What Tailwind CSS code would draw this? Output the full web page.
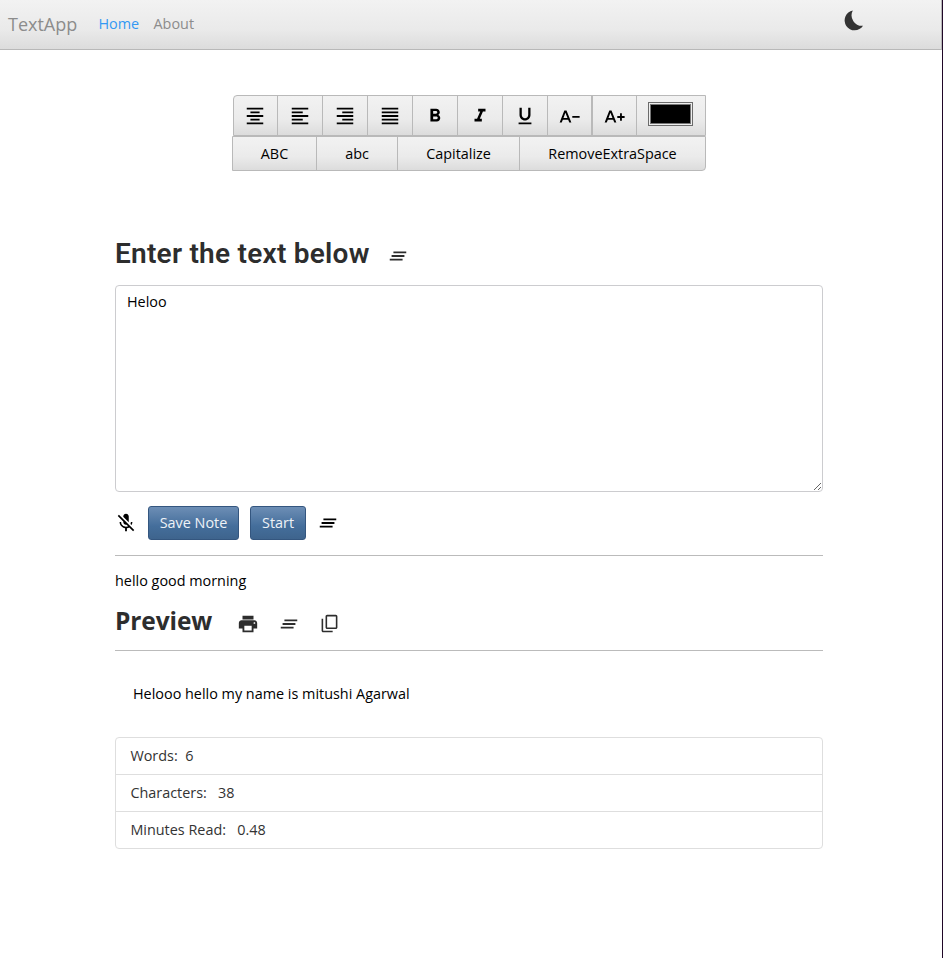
<!DOCTYPE html>
<html lang="en">
<head>
<meta charset="utf-8">
<title>TextApp</title>
<script src="https://cdn.jsdelivr.net/npm/@tailwindcss/browser@4"></script>
</head>
<body class="h-[958px] overflow-hidden bg-white font-['Open_Sans','Noto_Sans',sans-serif] text-[14.4px] leading-[21px] text-black">
<svg class="hidden">
  <symbol id="clear" viewBox="0 0 24 24"><path d="M5 13h14v-2H5v2zm-2 4h14v-2H3v2zM7 7v2h14V7H7z"/></symbol>
</svg>
<div class="h-full border-r border-[#200828]">
  <nav class="flex h-[50px] items-center border-r border-b border-[#b8b8b8] bg-linear-to-b from-[#f2f2f2] via-[#eaeaea] via-60% to-[#dcdcdc] pl-2 text-[#8c8c8c]">
    <a class="w-[90.5px] pb-px text-[18px]">TextApp</a>
    <a class="w-[55px] pb-[3px] text-[#3399f3]">Home</a>
    <a class="pb-[3px]">About</a>
    <svg class="mr-[76px] mb-[7px] ml-auto size-[22px]" viewBox="0 0 22 22" fill="#333"><path d="M9.800 .5A10 10 0 1 0 20 15.800A10.500 10.500 0 0 1 9.800 .5z"/></svg>
  </nav>

  <div class="ml-[232px] mt-[45px] w-[474px]">
    <div class="ml-px flex h-[41px] overflow-hidden rounded-tl-[4px] border border-[#b9b9b9] bg-linear-to-b from-[#f2f2f2] via-[#ebebeb] via-60% to-[#dcdcdc]">
      <button class="flex w-[43px] items-center justify-center pt-px pr-px"><svg class="size-[22px]" viewBox="0 0 24 24"><path d="M7 15v2h10v-2H7zm-4 6h18v-2H3v2zm0-8h18v-2H3v2zm4-6v2h10V7H7zM3 3v2h18V3H3z"/></svg></button>
      <button class="flex w-[45px] items-center justify-center border-l border-[#b9b9b9] pt-px"><svg class="size-[22px]" viewBox="0 0 24 24"><path d="M15 15H3v2h12v-2zm0-8H3v2h12V7zM3 13h18v-2H3v2zm0 8h18v-2H3v2zM3 3v2h18V3H3z"/></svg></button>
      <button class="flex w-[45px] items-center justify-center border-l border-[#b9b9b9] pt-px"><svg class="size-[22px]" viewBox="0 0 24 24"><path d="M3 21h18v-2H3v2zm6-4h12v-2H9v2zm-6-4h18v-2H3v2zm6-4h12V7H9v2zM3 3v2h18V3H3z"/></svg></button>
      <button class="flex w-[45px] items-center justify-center border-l border-[#b9b9b9] pt-px"><svg class="size-[22px]" viewBox="0 0 24 24"><path d="M3 21h18v-2H3v2zm0-4h18v-2H3v2zm0-4h18v-2H3v2zm0-4h18V7H3v2zm0-6v2h18V3H3z"/></svg></button>
      <button class="flex w-[45px] items-center justify-center border-l border-[#b9b9b9] pt-px"><svg class="size-[22px]" viewBox="0 0 24 24"><path d="M15.600 10.790c.97-.67 1.650-1.770 1.650-2.790 0-2.260-1.750-4-4-4H7v14h7.040c2.090 0 3.710-1.700 3.710-3.790 0-1.520-.86-2.820-2.150-3.420zM10 6.500h3c.83 0 1.500.67 1.500 1.500s-.67 1.500-1.500 1.500h-3v-3zm3.500 9H10v-3h3.500c.83 0 1.500.67 1.500 1.500s-.67 1.500-1.500 1.500z"/></svg></button>
      <button class="flex w-[45px] items-center justify-center border-l border-[#b9b9b9] pt-px"><svg class="size-[22px]" viewBox="0 0 24 24"><path d="M10 4v3h2.210l-3.420 8H6v3h8v-3h-2.210l3.420-8H18V4z"/></svg></button>
      <button class="flex w-[45px] items-center justify-center border-l border-[#b9b9b9] pt-px pr-px"><svg class="size-[22px]" viewBox="0 0 24 24"><path d="M12 17c3.310 0 6-2.690 6-6V3h-2.500v8c0 1.930-1.570 3.500-3.500 3.500S8.500 12.930 8.500 11V3H6v8c0 3.310 2.690 6 6 6zm-7 2v2h14v-2H5z"/></svg></button>
      <button class="flex w-[44px] items-center justify-center border-l border-[#b9b9b9] pt-[2px]"><svg class="size-[22px]" viewBox="0 0 24 24"><path fill-rule="evenodd" d="M5.800 5h2.400l5.300 13h-2.300l-1.200-3H4.200l-1.200 3H.7zM7 7.400L4.900 13h4.300zM14.500 10.800h8v2h-8z"/></svg></button>
      <button class="flex w-[45px] items-center justify-center border-l-2 border-[#b9b9b9] pt-[2px]"><svg class="size-[22px]" viewBox="0 0 24 24"><path fill-rule="evenodd" d="M5.800 5h2.400l5.300 13h-2.300l-1.200-3H4.200l-1.200 3H.7zM7 7.400L4.900 13h4.300zM14.500 11h3V8h2v3h3v2h-3v3h-2v-3h-3z"/></svg></button>
      <button class="flex flex-1 justify-center border-l border-[#b9b9b9] pt-[6px] pr-[2px]"><span class="h-6 w-[45px] border border-[#6b6b6b] bg-[#eee] p-px"><span class="block h-full border border-[#777] bg-black"></span></span></button>
    </div>
    <div class="flex h-[35px] overflow-hidden rounded-br-[4px] border border-[#b9b9b9] bg-linear-to-b from-[#f2f2f2] via-[#ebebeb] via-60% to-[#dcdcdc]">
      <button class="w-[83px]">ABC</button>
      <button class="w-[81px] border-l border-[#b9b9b9]">abc</button>
      <button class="w-[122px] border-l border-[#b9b9b9]">Capitalize</button>
      <button class="flex-1 border-l border-[#b9b9b9]">RemoveExtraSpace</button>
    </div>
  </div>

  <main class="ml-[115px] w-[708px] pt-[62px]">
    <h1 class="flex h-[42px] items-center text-[#2d2d2d]">
      <span class="w-[272px] whitespace-nowrap pb-[2px] font-['Roboto',sans-serif] text-[28px] font-semibold tracking-[0.25px]">Enter the text below</span>
      <svg class="mt-[4px] size-[22px]" fill="#2d2d2d"><use href="#clear"/></svg>
    </h1>
    <textarea class="mt-[10px] block h-[207px] w-full resize rounded-[4px] border border-[#cccccf] px-[11px] py-[5px]">Heloo</textarea>
    <div class="mt-[14px] flex h-[34px] items-center text-[#eef2f7]">
      <svg class="mr-[11px] size-[22px]" viewBox="0 0 24 24" fill="#000"><path d="M19 11h-1.700c0 .74-.16 1.430-.43 2.050l1.230 1.230c.56-.98.9-2.090.9-3.280zm-4.020.17c0-.06.02-.11.02-.17V5c0-1.660-1.340-3-3-3S9 3.340 9 5v.18l5.980 5.990zM4.270 3L3 4.270l6.010 6.010V11c0 1.660 1.330 3 2.990 3 .22 0 .44-.03.65-.08l1.660 1.660c-.71.33-1.500.52-2.310.52-2.760 0-5.300-2.100-5.300-5.100H5c0 3.410 2.720 6.230 6 6.720V21h2v-3.280c.91-.13 1.770-.45 2.540-.9L19.730 21 21 19.730 4.270 3z"/></svg>
      <button class="mr-[11px] h-full w-[91px] rounded-[3px] border border-[#34567f] bg-linear-to-b from-[#6d8eb5] via-[#446e9b] via-60% to-[#3e648d] pb-[2px]">Save Note</button>
      <button class="mr-[11px] h-full w-[56px] rounded-[3px] border border-[#34567f] bg-linear-to-b from-[#6d8eb5] via-[#446e9b] via-60% to-[#3e648d] pb-[2px]">Start</button>
      <svg class="size-[22px]" fill="#000"><use href="#clear"/></svg>
    </div>
    <hr class="mt-[15px] border-[#bbb]">
    <p class="mt-[14px]">hello good morning</p>
    <h2 class="mt-[11px] flex h-[38px] items-center text-[24.5px] font-bold text-[#2d2d2d]">
      <span class="w-[122px] pb-px tracking-[-0.1px]">Preview</span>
      <svg class="mt-[5px] mr-[19px] size-[22px]" viewBox="0 0 24 24" fill="#2d2d2d"><path d="M19 8H5c-1.660 0-3 1.340-3 3v6h4v4h12v-4h4v-6c0-1.660-1.340-3-3-3zm-3 11H8v-5h8v5zm3-7c-.55 0-1-.45-1-1s.45-1 1-1 1 .45 1 1-.45 1-1 1zm-1-9H6v4h12V3z"/></svg>
      <svg class="mt-[5px] mr-[20px] size-[22px]" fill="#2d2d2d"><use href="#clear"/></svg>
      <svg class="mt-[5px] size-[19px]" viewBox="0 0 24 24" fill="#2d2d2d"><path d="M4 6H2v15c0 1.100.9 2 2 2h12v-2H4zm18 11V3c0-1.100-.9-2-2-2H9c-1.100 0-2 .9-2 2v14c0 1.100.9 2 2 2h11c1.100 0 2-.9 2-2zm-2 0H9V3h11z"/></svg>
    </h2>
    <hr class="mt-[10px] border-[#bbb]">
    <p class="mt-[32px] pl-[18px]">Helooo hello my name is mitushi Agarwal</p>
    <ul class="mt-[33px] divide-y divide-[#dedede] rounded-[4px] border border-[#dedede] text-[#333]">
      <li class="h-[37px] pt-[7px] pl-[14.4px] whitespace-pre">Words:  6</li>
      <li class="h-[37px] pt-[7px] pl-[14.4px] whitespace-pre">Characters:   38</li>
      <li class="h-[36px] pt-[7px] pl-[14.4px] whitespace-pre">Minutes Read:   0.48</li>
    </ul>
  </main>
</div>
</body>
</html>
